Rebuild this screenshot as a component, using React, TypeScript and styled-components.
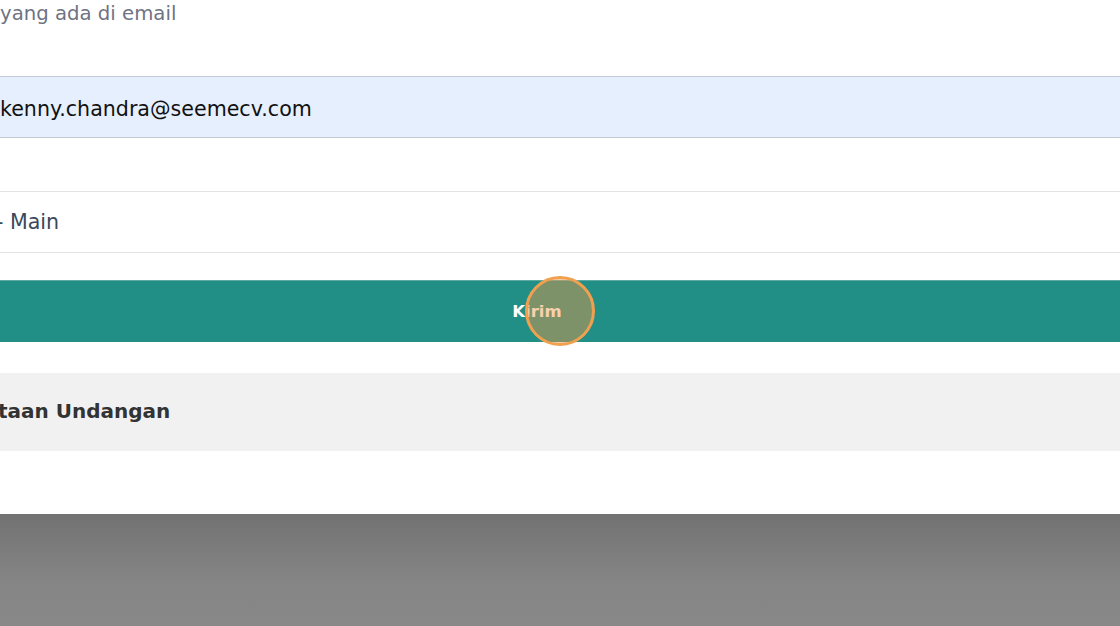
import React from 'react';
import styled, { createGlobalStyle } from 'styled-components';

const GlobalStyle = createGlobalStyle`
  html, body {
    margin: 0;
    padding: 0;
    background: #ffffff;
    font-family: 'DejaVu Sans', 'Open Sans', sans-serif;
    overflow: hidden;
  }
`;

const Page = styled.div`
  width: 1120px;
  height: 626px;
  display: flex;
  flex-direction: column;
  overflow: hidden;
`;

const Card = styled.div`
  background: #ffffff;
  height: 514px;
  display: flex;
  flex-direction: column;
`;

const Hint = styled.p`
  margin: 0;
  height: 76px;
  font-size: 19.7px;
  line-height: 27px;
  color: #6f7383;
  white-space: nowrap;
`;

const Field = styled.div<{ $filled?: boolean; $gapAfter: number }>`
  height: 60px;
  display: flex;
  align-items: center;
  box-sizing: content-box;
  background: ${(p) => (p.$filled ? '#e6effd' : '#ffffff')};
  border-top: 1px solid ${(p) => (p.$filled ? '#c4cbd5' : '#e3e3e3')};
  border-bottom: 1px solid ${(p) => (p.$filled ? '#c4cbd5' : '#e3e3e3')};
  margin-bottom: ${(p) => p.$gapAfter}px;
  font-size: 20.6px;
  color: ${(p) => (p.$filled ? '#111111' : '#3a4859')};
  white-space: nowrap;
`;

const FieldText = styled.span<{ $indent?: number; $drop?: number }>`
  margin-left: ${(p) => p.$indent ?? 0}px;
  padding-top: ${(p) => p.$drop ?? 0}px;
`;

const SubmitButton = styled.button`
  height: 62px;
  width: 100%;
  border: none;
  border-top: 1px solid #5fa9a3;
  background: #218f86;
  color: #ffffff;
  font-family: inherit;
  font-size: 16.5px;
  font-weight: 700;
  padding: 0 46px 0 0;
  margin-bottom: 31px;
  cursor: pointer;
`;

const ClickRing = styled.span`
  position: absolute;
  left: 525px;
  top: 276px;
  width: 64px;
  height: 64px;
  border-radius: 50%;
  border: 3px solid #f0a04e;
  background: rgba(240, 150, 70, 0.45);
  pointer-events: none;
`;

const SectionHeader = styled.div`
  height: 78px;
  background: #f1f1f1;
  display: flex;
  align-items: center;
  font-size: 20px;
  font-weight: 700;
  color: #333333;
  white-space: nowrap;
  padding-bottom: 3px;
  box-sizing: border-box;
`;

const Backdrop = styled.div`
  flex: 1;
  background: linear-gradient(to bottom, #727272 0%, #858585 60%, #888888 100%);
`;

const Wrap = styled.div`
  position: relative;
`;

export default function App() {
  return (
    <>
      <GlobalStyle />
      <Wrap>
        <Page>
          <Card>
            <Hint>yang ada di email</Hint>
            <Field $filled $gapAfter={53}>
              <FieldText $drop={3}>kenny.chandra@seemecv.com</FieldText>
            </Field>
            <Field $gapAfter={27}>
              <FieldText $indent={-4}>- Main</FieldText>
            </Field>
            <SubmitButton>Kirim</SubmitButton>
            <SectionHeader>
              <FieldText $indent={-2}>taan Undangan</FieldText>
            </SectionHeader>
          </Card>
          <Backdrop />
        </Page>
        <ClickRing />
      </Wrap>
    </>
  );
}
